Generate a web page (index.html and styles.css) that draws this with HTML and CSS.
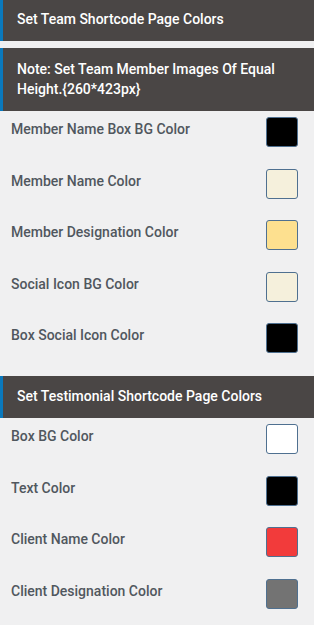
FILE: index.html
```html
<!DOCTYPE html>
<html>
<head>
<meta charset="utf-8">
<link rel="stylesheet" href="styles.css">
</head>
<body>
<div class="panel">
  <div class="heading heading-first">Set Team Shortcode Page Colors</div>
  <div class="heading heading-note">Note: Set Team Member Images Of Equal Height.{260*423px}</div>
  <div class="section">
    <div class="row"><span class="label">Member Name Box BG Color</span><span class="swatch c-black"></span></div>
    <div class="row"><span class="label">Member Name Color</span><span class="swatch c-cream"></span></div>
    <div class="row"><span class="label">Member Designation Color</span><span class="swatch c-yellow"></span></div>
    <div class="row"><span class="label">Social Icon BG Color</span><span class="swatch c-cream"></span></div>
    <div class="row"><span class="label">Box Social Icon Color</span><span class="swatch c-black"></span></div>
  </div>
  <div class="heading heading-section">Set Testimonial Shortcode Page Colors</div>
  <div class="section">
    <div class="row"><span class="label">Box BG Color</span><span class="swatch c-white"></span></div>
    <div class="row"><span class="label">Text Color</span><span class="swatch c-black"></span></div>
    <div class="row"><span class="label">Client Name Color</span><span class="swatch c-red"></span></div>
    <div class="row"><span class="label">Client Designation Color</span><span class="swatch c-grey"></span></div>
  </div>
</div>
</body>
</html>
```

FILE: styles.css
```css
html, body {
  margin: 0;
  padding: 0;
  background: #f0f0f1;
}
body {
  font-family: Roboto, "Liberation Sans", Arial, sans-serif;
  font-size: 14px;
  line-height: 20px;
}
.panel {
  display: flex;
  flex-direction: column;
}
.heading {
  background: #4a4645;
  color: #ffffff;
  font-weight: 500;
  border-left: 3px solid #0a79bd;
  padding: 10px 14px 12px 14px;
}
.heading-first {
  padding-top: 9px;
}
.heading-note {
  margin-top: 7px;
  padding-top: 11px;
  padding-bottom: 12px;
  padding-right: 20px;
}
.heading-section {
  margin-top: 7px;
}
.section {
  display: flex;
  flex-direction: column;
}
.row {
  display: flex;
  justify-content: space-between;
  align-items: flex-start;
  padding: 6px 16px 15.6px 11px;
}
.label {
  color: #50575e;
  font-weight: 500;
  padding-top: 2px;
}
.swatch {
  width: 30px;
  height: 28px;
  border: 1px solid #4f7090;
  border-radius: 3px;
  box-sizing: content-box;
}
.c-black { background: #000000; }
.c-cream { background: #f5f0dc; }
.c-yellow { background: #fde08f; }
.c-white { background: #ffffff; }
.c-red { background: #f23b3b; }
.c-grey { background: #737373; }
```
